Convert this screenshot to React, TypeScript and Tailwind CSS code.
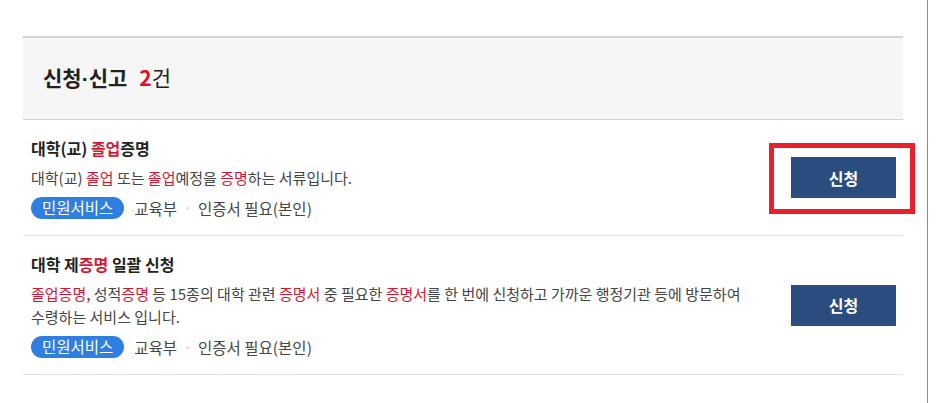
import React from 'react'

type Part = { t: string; red?: boolean }

type Item = {
  title: Part[]
  desc: Part[]
  org: string
  cert: string
  highlight?: boolean
}

const items: Item[] = [
  {
    title: [{ t: '대학(교) ' }, { t: '졸업', red: true }, { t: '증명' }],
    desc: [
      { t: '대학(교) ' },
      { t: '졸업', red: true },
      { t: ' 또는 ' },
      { t: '졸업', red: true },
      { t: '예정을 ' },
      { t: '증명', red: true },
      { t: '하는 서류입니다.' },
    ],
    org: '교육부',
    cert: '인증서 필요(본인)',
    highlight: true,
  },
  {
    title: [{ t: '대학 제' }, { t: '증명', red: true }, { t: ' 일괄 신청' }],
    desc: [
      { t: '졸업증명', red: true },
      { t: ', 성적' },
      { t: '증명', red: true },
      { t: ' 등 15종의 대학 관련 ' },
      { t: '증명서', red: true },
      { t: ' 중 필요한 ' },
      { t: '증명서', red: true },
      { t: '를 한 번에 신청하고 가까운 행정기관 등에 방문하여 수령하는 서비스 입니다.' },
    ],
    org: '교육부',
    cert: '인증서 필요(본인)',
  },
]

function Text({ parts }: { parts: Part[] }) {
  return (
    <>
      {parts.map((p, i) =>
        p.red ? (
          <span key={i} className="text-[#cf1a36]">{p.t}</span>
        ) : (
          <React.Fragment key={i}>{p.t}</React.Fragment>
        )
      )}
    </>
  )
}

function Row({ item }: { item: Item }) {
  return (
    <li className="flex items-center border-b border-[#e2e2e2] py-4 pl-[8px] pr-[7px]">
      <div className="min-w-0 flex-1 pr-[20px]">
        <h3 className="text-[16px] font-bold leading-[24px] text-[#222]">
          <Text parts={item.title} />
        </h3>
        <p className="mt-[6px] break-keep text-[15px] leading-[23px] text-[#444]">
          <Text parts={item.desc} />
        </p>
        <div className="mt-[8px] flex items-center text-[15.5px] leading-[22px] text-[#444]">
          <span className="flex h-[22px] items-center rounded-full bg-[#2f7fe0] px-[11px] text-[15.5px] leading-none text-white">
            민원서비스
          </span>
          <span className="ml-[10px]">{item.org}</span>
          <span className="mx-[9px] h-[3px] w-[3px] rounded-full bg-[#dadada]" />
          <span>{item.cert}</span>
        </div>
      </div>
      <div className="relative">
        <button className="flex h-[41px] w-[105px] items-center justify-center bg-[#2b4c7e] text-[16px] font-bold text-white">
          신청
        </button>
        {item.highlight && (
          <div className="pointer-events-none absolute -left-[22px] -top-[14px] h-[71px] w-[146px] border-[5px] border-[#e8202a]" />
        )}
      </div>
    </li>
  )
}

export default function App() {
  return (
    <div
      className="min-h-[403px] w-[952px] bg-white"
      style={{ fontFamily: '"Noto Sans CJK KR", "Noto Sans", sans-serif' }}
    >
      <div className="min-h-[403px] w-[928px] border-r border-[#8c8c8c] pl-[23px] pr-[24px] pt-[36px]">
        <header className="flex h-[84px] items-center border-t-2 border-b border-[#d2d2d2] bg-[#f6f6f6] pl-[20px]">
          <h2 className="text-[21px] font-bold text-[#222]">
            신청<span style={{ fontFamily: '"Liberation Sans", sans-serif' }}>·</span>신고
            <span className="ml-[12px] text-[#e0102a]">2</span>
            <span className="font-normal">건</span>
          </h2>
        </header>
        <ul>
          {items.map((it, i) => (
            <Row key={i} item={it} />
          ))}
        </ul>
      </div>
    </div>
  )
}
